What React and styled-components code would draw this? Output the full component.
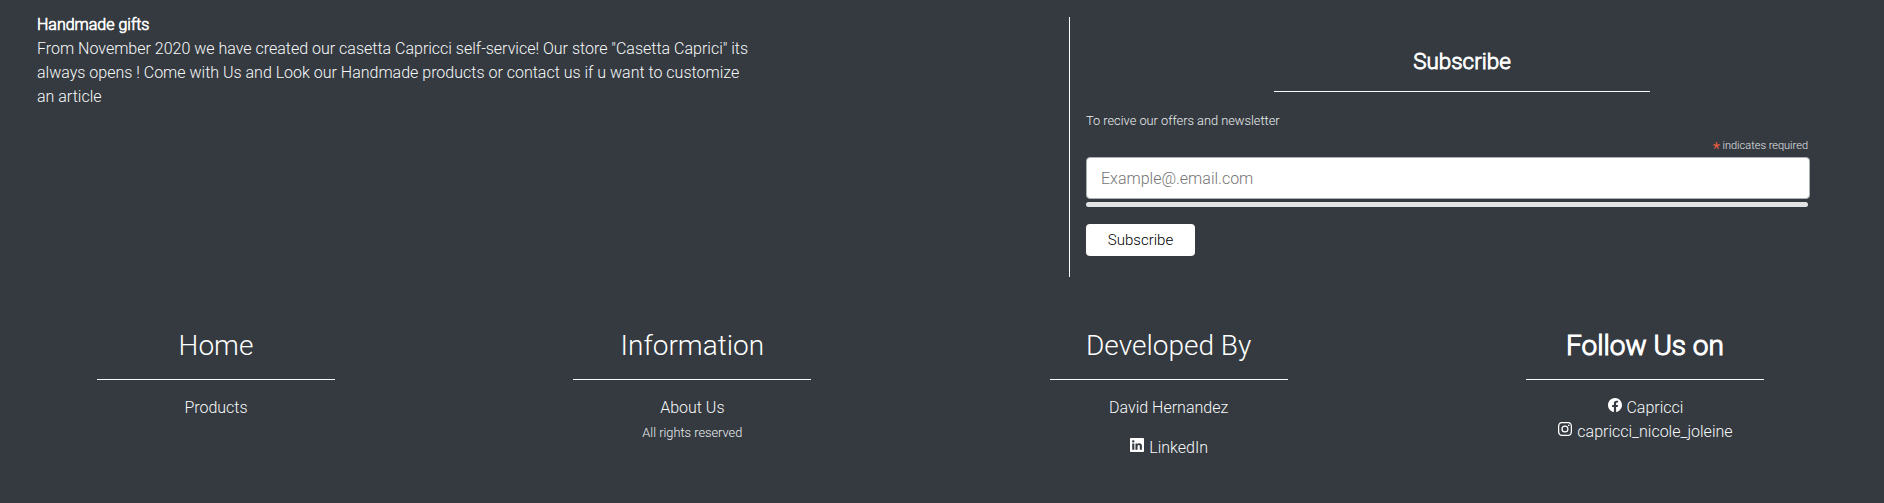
import React from 'react';
import styled, { createGlobalStyle, css } from 'styled-components';

const GlobalStyle = createGlobalStyle`
  *, *::before, *::after { box-sizing: border-box; }
  body {
    margin: 0;
    background: #343a40;
    color: #f8f9fa;
    font-family: Roboto, "Liberation Sans", sans-serif;
    font-size: 16px;
    font-weight: 300;
    line-height: 24px;
  }
  p, h3, h4 { margin: 0; font-weight: 300; }
`;

const emboldened = css`
  -webkit-text-stroke: 0.042em currentColor;
`;

const Footer = styled.footer`
  min-height: 503px;
  padding-top: 17px;
  background: #343a40;
`;

const TopRow = styled.section`
  display: flex;
  justify-content: space-between;
  height: 260px;
  padding: 0 30px 0 37px;
`;

const About = styled.div`
  width: 720px;
  margin-top: -4px;
`;

const AboutTitle = styled.p`
  color: #fff;
  ${emboldened}
`;

const Newsletter = styled.div`
  width: 785px;
  border-left: 1px solid #fff;
  padding-top: 31px;
`;

const NewsletterTitle = styled.h4`
  color: #fff;
  font-size: 22.4px;
  line-height: 27px;
  text-align: center;
  ${emboldened}
`;

const Rule = styled.hr`
  width: ${({ $width }) => $width}px;
  height: 1px;
  margin: 16px auto;
  border: 0;
  background: #f8f9fa;
`;

const Form = styled.form`
  display: flex;
  flex-direction: column;
  align-items: flex-start;
  width: 722px;
  margin-left: 16px;
`;

const Small = styled.small`
  display: block;
  padding-top: 1px;
  font-size: 12.8px;
  line-height: 24px;
  color: #eceef0;
`;

const Required = styled.div`
  align-self: flex-end;
  height: 16px;
  margin-top: 4px;
  font-size: 11px;
  line-height: 17px;
  color: #e4e6e8;
`;

const Asterisk = styled.span`
  position: relative;
  top: 5px;
  color: #e85c41;
  font-size: 16.5px;
  font-weight: 400;
  line-height: 0;
`;

const EmailInput = styled.input`
  width: 724px;
  height: 42px;
  margin: 4px 0 0;
  padding: 0 14px;
  border: 1px solid #abb0b2;
  border-radius: 4px;
  background: #fff;
  font: inherit;
  &::placeholder { color: #757575; opacity: 1; }
`;

const Bar = styled.div`
  width: 722px;
  height: 5px;
  margin-top: 3px;
  border-radius: 3px;
  background: #e2e3e5;
`;

const SubmitButton = styled.button`
  width: 109px;
  height: 32px;
  margin-top: 17px;
  padding: 0;
  border: 0;
  border-radius: 4px;
  background: #fff;
  color: #000;
  font: inherit;
  font-size: 15px;
`;

const Columns = styled.section`
  display: grid;
  grid-template-columns: repeat(4, 397px);
  column-gap: 79.33px;
  padding: 52px 0 0 17.5px;
  text-align: center;
`;

const ColumnTitle = styled.h3`
  color: #fff;
  font-size: 28px;
  line-height: 34px;
  ${({ $bold }) => $bold && emboldened}
`;

const Line = styled.p`
  margin-top: ${({ $gap }) => $gap || 0}px;
`;

const Icon = styled.svg`
  width: 14px;
  height: 14px;
  margin: 0 1px;
  vertical-align: 1px;
  fill: #fff;
`;

const LinkedInIcon = () => (
  <Icon viewBox="0 0 16 16">
    <path d="M0 1.146C0 .513.526 0 1.175 0h13.65C15.474 0 16 .513 16 1.146v13.708c0 .633-.526 1.146-1.175 1.146H1.175C.526 16 0 15.487 0 14.854V1.146zm4.943 12.248V6.169H2.542v7.225h2.401zm-1.2-8.212c.837 0 1.358-.554 1.358-1.248-.015-.709-.52-1.248-1.342-1.248-.822 0-1.359.54-1.359 1.248 0 .694.521 1.248 1.327 1.248h.016zm4.908 8.212V9.359c0-.216.016-.432.08-.586.173-.431.568-.878 1.232-.878.869 0 1.216.662 1.216 1.634v3.865h2.401V9.25c0-2.22-1.184-3.252-2.764-3.252-1.274 0-1.845.7-2.165 1.193v.025h-.016a5.54 5.54 0 0 1 .016-.025V6.169h-2.4c.03.678 0 7.225 0 7.225h2.4z" />
  </Icon>
);

const FacebookIcon = () => (
  <Icon viewBox="0 0 16 16">
    <path d="M16 8.049c0-4.446-3.582-8.05-8-8.05C3.58 0-.002 3.603-.002 8.05c0 4.017 2.926 7.347 6.75 7.951v-5.625h-2.03V8.05H6.75V6.275c0-2.017 1.195-3.131 3.022-3.131.876 0 1.791.157 1.791.157v1.98h-1.009c-.993 0-1.303.621-1.303 1.258v1.51h2.218l-.354 2.326H9.25V16c3.824-.604 6.75-3.934 6.75-7.951z" />
  </Icon>
);

const InstagramIcon = () => (
  <Icon viewBox="0 0 16 16">
    <path d="M8 0C5.829 0 5.556.01 4.703.048 3.85.088 3.269.222 2.76.42a3.917 3.917 0 0 0-1.417.923A3.927 3.927 0 0 0 .42 2.76C.222 3.268.087 3.85.048 4.7.01 5.555 0 5.827 0 8.001c0 2.172.01 2.444.048 3.297.04.852.174 1.433.372 1.942.205.526.478.972.923 1.417.444.445.89.719 1.416.923.51.198 1.09.333 1.942.372C5.555 15.99 5.827 16 8 16s2.444-.01 3.298-.048c.851-.04 1.434-.174 1.943-.372a3.916 3.916 0 0 0 1.416-.923c.445-.445.718-.891.923-1.417.197-.509.332-1.09.372-1.942C15.99 10.445 16 10.173 16 8s-.01-2.445-.048-3.299c-.04-.851-.175-1.433-.372-1.941a3.926 3.926 0 0 0-.923-1.417A3.911 3.911 0 0 0 13.24.42c-.51-.198-1.092-.333-1.943-.372C10.443.01 10.172 0 7.998 0h.003zm-.717 1.442h.718c2.136 0 2.389.007 3.232.046.78.035 1.204.166 1.486.275.373.145.64.319.92.599.28.28.453.546.598.92.11.281.24.705.275 1.485.039.843.047 1.096.047 3.231s-.008 2.389-.047 3.232c-.035.78-.166 1.203-.275 1.485a2.47 2.47 0 0 1-.599.919c-.28.28-.546.453-.92.598-.28.11-.704.24-1.485.276-.843.038-1.096.047-3.232.047s-2.39-.009-3.233-.047c-.78-.036-1.203-.166-1.485-.276a2.478 2.478 0 0 1-.92-.598 2.48 2.48 0 0 1-.6-.92c-.109-.281-.24-.705-.275-1.485-.038-.843-.046-1.096-.046-3.233 0-2.136.008-2.388.046-3.231.036-.78.166-1.204.276-1.486.145-.373.319-.64.599-.92.28-.28.546-.453.92-.598.282-.11.705-.24 1.485-.276.738-.034 1.024-.044 2.515-.045v.002zm4.988 1.328a.96.96 0 1 0 0 1.92.96.96 0 0 0 0-1.92zm-4.27 1.122a4.109 4.109 0 1 0 0 8.217 4.109 4.109 0 0 0 0-8.217zm0 1.441a2.667 2.667 0 1 1 0 5.334 2.667 2.667 0 0 1 0-5.334z" />
  </Icon>
);

export default function App() {
  return (
    <>
      <GlobalStyle />
      <Footer>
        <TopRow>
          <About>
            <AboutTitle>Handmade gifts</AboutTitle>
            <p>
              From November 2020 we have created our casetta Capricci self-service! Our store
              "Casetta Caprici" its always opens ! Come with Us and Look our Handmade products or
              contact us if u want to customize an article
            </p>
          </About>
          <Newsletter>
            <NewsletterTitle>Subscribe</NewsletterTitle>
            <Rule $width={376} />
            <Form onSubmit={(e) => e.preventDefault()}>
              <Small>To recive our offers and newsletter</Small>
              <Required>
                <Asterisk>*</Asterisk> indicates required
              </Required>
              <EmailInput type="email" placeholder="Example@.email.com" />
              <Bar />
              <SubmitButton type="submit">Subscribe</SubmitButton>
            </Form>
          </Newsletter>
        </TopRow>
        <Columns>
          <div>
            <ColumnTitle>Home</ColumnTitle>
            <Rule $width={238} />
            <Line>Products</Line>
          </div>
          <div>
            <ColumnTitle>Information</ColumnTitle>
            <Rule $width={238} />
            <Line>About Us</Line>
            <Small>All rights reserved</Small>
          </div>
          <div>
            <ColumnTitle>Developed By</ColumnTitle>
            <Rule $width={238} />
            <Line>David Hernandez</Line>
            <Line $gap={16}>
              <LinkedInIcon /> LinkedIn
            </Line>
          </div>
          <div>
            <ColumnTitle $bold>Follow Us on</ColumnTitle>
            <Rule $width={238} />
            <Line>
              <FacebookIcon /> Capricci
            </Line>
            <Line>
              <InstagramIcon /> capricci_nicole_joleine
            </Line>
          </div>
        </Columns>
      </Footer>
    </>
  );
}
